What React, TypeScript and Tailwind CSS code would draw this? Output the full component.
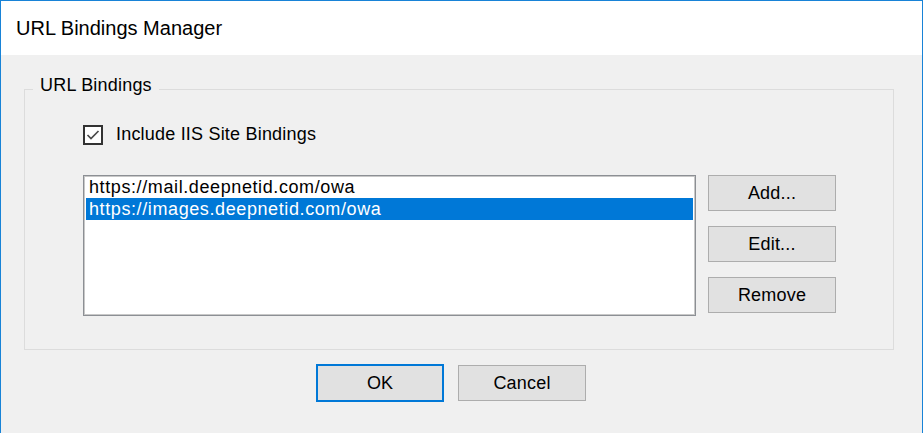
const URLS = ["https://mail.deepnetid.com/owa", "https://images.deepnetid.com/owa"];
const SELECTED = 1;

function SideButton({ children }: { children: React.ReactNode }) {
  return (
    <button className="flex h-[36px] w-[128px] items-center justify-center border border-[#adadad] bg-[#e1e1e1] text-[18px] tracking-[0.2px] text-black">
      {children}
    </button>
  );
}

export default function App() {
  return (
    <div
      className="flex h-[433px] w-[923px] flex-col overflow-hidden border-x border-t border-[#1883d7] bg-[#f0f0f0] text-black"
      style={{ fontFamily: '"Liberation Sans", Arial, sans-serif' }}
    >
      {/* title bar */}
      <div className="h-[54px] shrink-0 bg-white pl-[15px] pt-[16px] text-[20px] leading-[23px]">
        URL Bindings Manager
      </div>

      {/* group box */}
      <div className="relative ml-[23px] mt-[34px] h-[261px] w-[870px] shrink-0 border border-[#dcdcdc]">
        <span className="absolute left-[8px] top-[-15px] bg-[#f0f0f0] px-[7px] text-[18px] leading-[21px] tracking-[0.2px]">
          URL Bindings
        </span>

        <div className="pl-[58px] pt-[34px]">
          <label className="flex items-start gap-[13px]">
            <span className="mt-[1px] flex h-[20px] w-[20px] items-center justify-center border-2 border-[#333333] bg-white">
              <svg width="16" height="16" viewBox="0 0 16 16">
                <polyline points="2.5,8 6,11.5 13.5,4" fill="none" stroke="#4a4a4a" strokeWidth="1.7" />
              </svg>
            </span>
            <span className="text-[18px] leading-[21px] tracking-[0.2px]">Include IIS Site Bindings</span>
          </label>

          <div className="mt-[30px] flex items-start gap-[12px]">
            <div className="h-[141px] w-[613px] border border-[#8c8f94] bg-white px-[2px] pt-[1px] shadow-[inset_0_0_0_1px_#c8c8c8]">
              {URLS.map((u, i) => (
                <div
                  key={u}
                  className={
                    i === SELECTED
                      ? "h-[22px] bg-[#0078d7] pl-[3px] text-[18px] leading-[22px] tracking-[0.6px] text-white"
                      : "h-[21px] pl-[3px] text-[18px] leading-[21px] tracking-[0.6px]"
                  }
                >
                  {u}
                </div>
              ))}
            </div>

            <div className="flex flex-col gap-[15px]">
              <SideButton>Add...</SideButton>
              <SideButton>Edit...</SideButton>
              <SideButton>Remove</SideButton>
            </div>
          </div>
        </div>
      </div>

      {/* dialog buttons */}
      <div className="ml-[315px] mt-[14px] flex items-start gap-[14px]">
        <button className="flex h-[38px] w-[128px] items-center justify-center border-2 border-[#0078d7] bg-[#e1e1e1] text-[18px]">
          OK
        </button>
        <button className="mt-[1px] flex h-[36px] w-[128px] items-center justify-center border border-[#adadad] bg-[#e1e1e1] text-[18px] tracking-[0.2px]">
          Cancel
        </button>
      </div>
    </div>
  );
}
